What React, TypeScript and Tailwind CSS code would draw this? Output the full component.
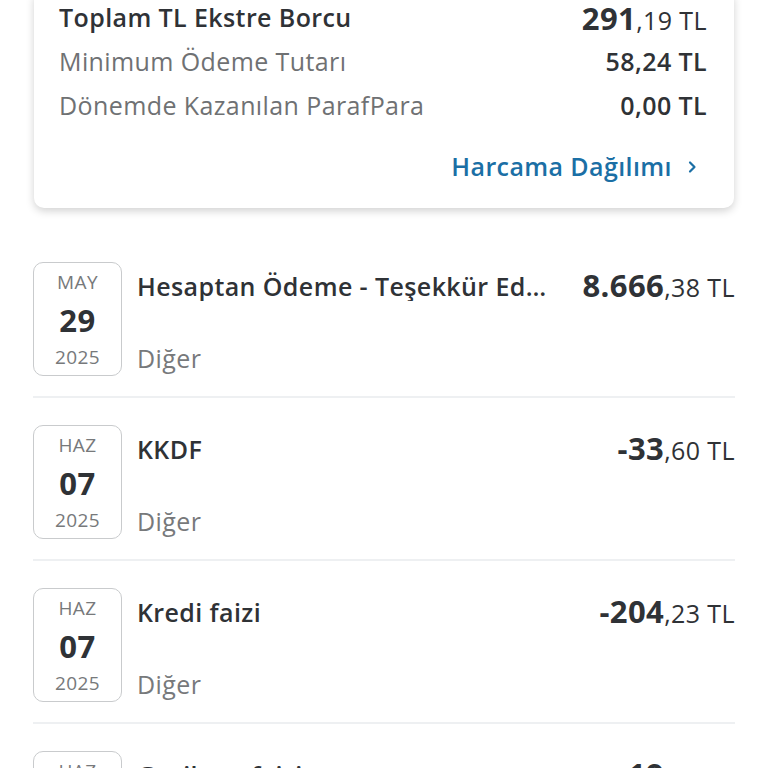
import React from 'react';

type Tx = {
  month: string;
  day: string;
  year: string;
  title: string;
  category: string;
  whole: string;
  frac: string;
};

const txs: Tx[] = [
  { month: 'MAY', day: '29', year: '2025', title: 'Hesaptan Ödeme - Teşekkür Ederiz', category: 'Diğer', whole: '8.666', frac: ',38 TL' },
  { month: 'HAZ', day: '07', year: '2025', title: 'KKDF', category: 'Diğer', whole: '-33', frac: ',60 TL' },
  { month: 'HAZ', day: '07', year: '2025', title: 'Kredi faizi', category: 'Diğer', whole: '-204', frac: ',23 TL' },
  { month: 'HAZ', day: '07', year: '2025', title: 'Gecikme faizi', category: 'Diğer', whole: '-19', frac: ',78 TL' },
];

function SummaryRow({ label, value, strong }: { label: string; value: React.ReactNode; strong?: boolean }) {
  return (
    <div className="flex h-[44px] items-center justify-between">
      <span className={strong ? 'text-[25px] font-semibold text-[#2f3236]' : 'text-[25px] text-[#6f7173]'}>{label}</span>
      <span className="text-[25px] font-semibold text-[#2f3236]">{value}</span>
    </div>
  );
}

export default function App() {
  return (
    <div className="h-[768px] overflow-hidden bg-white font-['Open_Sans',sans-serif] tracking-[0.4px]">
      {/* ekstre özeti */}
      <div className="mx-[34px] -mt-[10px] rounded-[10px] bg-white pt-[6px] pb-[21px] pl-[25px] pr-[27px] shadow-[0_3px_8px_rgba(0,0,0,0.18)]">
        <SummaryRow
          label="Toplam TL Ekstre Borcu"
          strong
          value={
            <>
              <span className="text-[31px] font-bold">291</span>
              <span className="font-medium">,19 TL</span>
            </>
          }
        />
        <SummaryRow label="Minimum Ödeme Tutarı" value="58,24 TL" />
        <SummaryRow label="Dönemde Kazanılan ParafPara" value="0,00 TL" />
        <div className="mt-[19px] flex h-[40px] items-center justify-end pr-[9px] text-[25px] font-semibold text-[#1b6fa5]">
          Harcama Dağılımı
          <svg className="ml-[14px]" width="12" height="14" viewBox="0 0 12 14" fill="none">
            <path d="M4 2.5 L8.5 7 L4 11.5" stroke="#1b6fa5" strokeWidth="2.2" strokeLinecap="round" strokeLinejoin="round" />
          </svg>
        </div>
      </div>

      {/* hareketler */}
      <div className="mx-[33px] mt-[27px]">
        {txs.map((t, i) => (
          <div key={i} className="flex border-b-2 border-[#eef0f2] pt-[27px] pb-[20px]">
            <div className="flex h-[114px] w-[89px] shrink-0 flex-col items-center rounded-[10px] border border-[#c9cbcd]">
              <div className="mt-[6px] text-[19px] leading-[26px] text-[#77797b]">{t.month}</div>
              <div className="text-[31px] font-bold leading-[50px] text-[#2f3236]">{t.day}</div>
              <div className="text-[19px] leading-[24px] text-[#77797b]">{t.year}</div>
            </div>
            <div className="ml-[15px] flex h-[114px] min-w-0 flex-1 flex-col justify-between pt-[8px] pb-[3px]">
              <div className="flex items-center justify-between leading-[30px]">
                <span className="truncate pr-[28px] text-[25px] font-semibold text-[#2f3236]">{t.title}</span>
                <span className="shrink-0 text-[25px] font-medium text-[#2f3236]">
                  <span className="text-[31px] font-bold">{t.whole}</span>
                  {t.frac}
                </span>
              </div>
              <div className="text-[25px] leading-[30px] text-[#77797b]">{t.category}</div>
            </div>
          </div>
        ))}
      </div>
    </div>
  );
}
